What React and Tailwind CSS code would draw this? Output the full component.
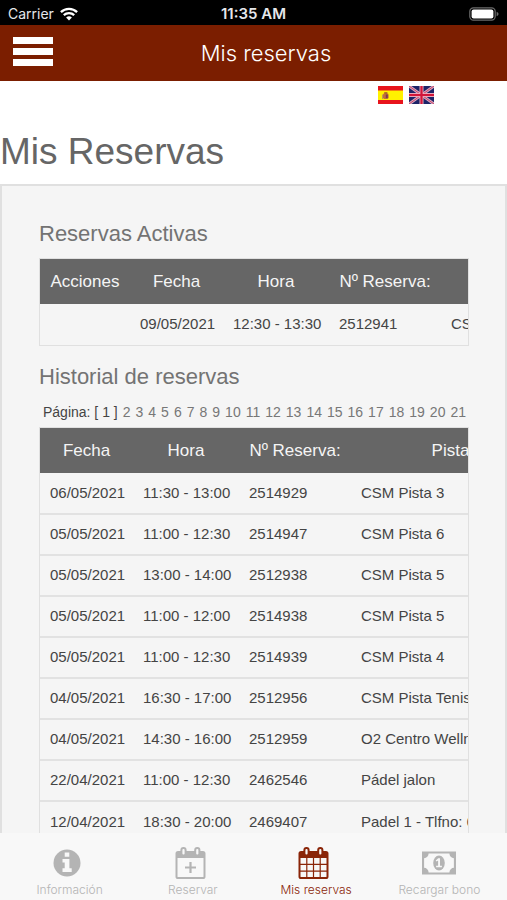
const activas = [
  { fecha: "09/05/2021", hora: "12:30 - 13:30", numero: "2512941", pista: "CSM Pista 5" },
];

const historial = [
  { fecha: "06/05/2021", hora: "11:30 - 13:00", numero: "2514929", pista: "CSM Pista 3" },
  { fecha: "05/05/2021", hora: "11:00 - 12:30", numero: "2514947", pista: "CSM Pista 6" },
  { fecha: "05/05/2021", hora: "13:00 - 14:00", numero: "2512938", pista: "CSM Pista 5" },
  { fecha: "05/05/2021", hora: "11:00 - 12:00", numero: "2514938", pista: "CSM Pista 5" },
  { fecha: "05/05/2021", hora: "11:00 - 12:30", numero: "2514939", pista: "CSM Pista 4" },
  { fecha: "04/05/2021", hora: "16:30 - 17:00", numero: "2512956", pista: "CSM Pista Tenis" },
  { fecha: "04/05/2021", hora: "14:30 - 16:00", numero: "2512959", pista: "O2 Centro Wellness" },
  { fecha: "22/04/2021", hora: "11:00 - 12:30", numero: "2462546", pista: "Pádel jalon" },
  { fecha: "12/04/2021", hora: "18:30 - 20:00", numero: "2469407", pista: "Padel 1 - Tlfno: 6" },
];

const paginas = Array.from({ length: 20 }, (_, i) => i + 2);

const SpainFlag = () => (
  <svg viewBox="0 0 25 18" className="block w-[25px] h-[18px]" aria-hidden="true">
    <rect width="25" height="18" fill="#e8141c" />
    <rect y="4.5" width="25" height="9.5" fill="#fff200" />
    <rect x="5" y="7.5" width="5.6" height="5.5" rx="1.4" fill="#c0703a" />
    <path d="M6.2 6.2h3.2v1.6H6.2z" fill="#a8542c" />
    <path d="M7.8 8.5h2v3.6h-2z" fill="#7d3b52" />
    <path d="M4 8.4h1v4.6H4z" fill="#b9a05a" />
  </svg>
);

const UkFlag = () => (
  <svg viewBox="0 0 25 18" className="block w-[25px] h-[18px]" aria-hidden="true">
    <rect width="25" height="18" fill="#1d2468" />
    <path d="M0 0l25 18M25 0L0 18" stroke="#d9a9c0" strokeWidth="2.8" />
    <path d="M0 0l25 18M25 0L0 18" stroke="#c8446a" strokeWidth="1" />
    <path d="M12.5 0v18M0 9h25" stroke="#e9a9ba" strokeWidth="4" />
    <path d="M12.5 0v18M0 9h25" stroke="#d2163a" strokeWidth="2.2" />
  </svg>
);

const InfoIcon = () => (
  <svg viewBox="0 0 36 34" className="w-9 h-[34px]" fill="currentColor" aria-hidden="true">
    <circle cx="15" cy="17" r="13.5" />
    <path
      d="M12.7 6.6h4.6v4.2h-4.6zM10.5 13h6.9v9.2h2.3v3.7h-9.2v-3.7h2.2v-5.6h-2.2z"
      fill="#f8f8f8"
    />
  </svg>
);

const CalendarPlusIcon = () => (
  <svg viewBox="0 0 36 34" className="w-9 h-[34px]" fill="none" stroke="currentColor" aria-hidden="true">
    <rect x="1.5" y="6" width="28" height="26" rx="1.6" strokeWidth="2" />
    <path d="M1.5 6h28v6h-28z" fill="currentColor" stroke="none" />
    <rect x="6.4" y="2" width="4.2" height="7.6" rx="2" fill="#f8f8f8" strokeWidth="2" />
    <rect x="20.2" y="2" width="4.2" height="7.6" rx="2" fill="#f8f8f8" strokeWidth="2" />
    <path d="M15.5 16v11M10 21.5h11" strokeWidth="2.2" />
  </svg>
);

const CalendarIcon = () => (
  <svg viewBox="0 0 36 34" className="w-9 h-[34px]" fill="none" stroke="currentColor" aria-hidden="true">
    <rect x="1.5" y="6" width="28" height="26" rx="1.6" strokeWidth="2" />
    <path d="M1.5 6h28v6h-28z" fill="currentColor" stroke="none" />
    <rect x="6.4" y="2" width="4.2" height="7.6" rx="2" fill="#f8f8f8" strokeWidth="2" />
    <rect x="20.2" y="2" width="4.2" height="7.6" rx="2" fill="#f8f8f8" strokeWidth="2" />
    <path d="M8.8 12v20M15.5 12v20M22.2 12v20M1.5 18.3h28M1.5 25.2h28" strokeWidth="1.2" />
  </svg>
);

const MoneyIcon = () => (
  <svg viewBox="0 0 36 34" className="w-9 h-[34px]" fill="currentColor" aria-hidden="true">
    <path
      fillRule="evenodd"
      d="M1 5.5h34v23H1zM7.6 7.6a4.6 4.6 0 0 1-4.5 4.6v9.6a4.6 4.6 0 0 1 4.5 4.6h20.8a4.6 4.6 0 0 1 4.5-4.6v-9.6a4.6 4.6 0 0 1-4.5-4.6z"
    />
    <ellipse cx="18" cy="17" rx="5.8" ry="7.4" />
    <path d="M17.2 12.3h1.8v7.5h1.9v1.5h-5.8v-1.5h2v-5.2l-1.5 1-.9-1.2z" fill="#f8f8f8" />
  </svg>
);

const tabs = [
  { label: "Información", Icon: InfoIcon },
  { label: "Reservar", Icon: CalendarPlusIcon },
  { label: "Mis reservas", Icon: CalendarIcon, active: true },
  { label: "Recargar bono", Icon: MoneyIcon },
];

const StatusBar = () => (
  <div className="grid grid-cols-3 items-center h-[25px] shrink-0 bg-black text-white px-2 pt-[2px] font-[Inter,sans-serif]">
    <div className="flex items-center gap-1.5 text-sm text-gray-200">
      <span>Carrier</span>
      <svg viewBox="0 0 18 14" className="w-[18px] h-[14px]" fill="none" stroke="#fff" strokeWidth="2.3" aria-hidden="true">
        <path d="M.9 5.1a11.6 11.6 0 0 1 16.2 0" />
        <path d="M3.8 8.2a7.5 7.5 0 0 1 10.4 0" />
        <path d="M9 13.6l-2.9-3a4.2 4.2 0 0 1 5.8 0z" fill="#fff" stroke="none" />
      </svg>
    </div>
    <div className="text-center text-[15px] leading-5 font-semibold text-gray-200">11:35 AM</div>
    <div className="flex justify-end">
      <svg viewBox="0 0 30 14" className="w-[30px] h-[14px]" aria-hidden="true">
        <rect x=".8" y=".8" width="25.4" height="12.4" rx="3.6" fill="none" stroke="#6b6b6b" strokeWidth="1.2" />
        <rect x="2.6" y="2.6" width="21.8" height="8.8" rx="2" fill="#fff" />
        <path d="M27.6 4.8c1.3.5 1.9 1.3 1.9 2.2s-.6 1.7-1.9 2.2z" fill="#6b6b6b" />
      </svg>
    </div>
  </div>
);

const ReservasTable = ({ rows, acciones }) => (
  <div className="overflow-hidden border border-[#e0e0e0]">
    <table className={acciones ? "table-fixed w-[600px]" : "table-fixed w-[510px]"}>
      <colgroup>
        {acciones && <col className="w-[90px]" />}
        <col className="w-[93px]" />
        <col className="w-[106px]" />
        <col className="w-[112px]" />
        <col />
      </colgroup>
      <thead className="bg-[#666] text-[#f5f5f5] text-[17px]">
        <tr className="h-[45px]">
          {acciones && <th className="font-normal">Acciones</th>}
          <th className="font-normal">Fecha</th>
          <th className="font-normal">Hora</th>
          <th className="font-normal">Nº Reserva:</th>
          <th className="font-normal">Pista</th>
        </tr>
      </thead>
      <tbody className="text-[15px] text-[#444]">
        {rows.map((row) => (
          <tr key={row.numero} className="h-[41px] border-b-2 border-[#e2e2e2] last:border-b-0">
            {acciones && <td></td>}
            <td className="px-[10px] whitespace-nowrap">{row.fecha}</td>
            <td className="px-[10px] whitespace-nowrap">{row.hora}</td>
            <td className="px-[10px] whitespace-nowrap">{row.numero}</td>
            <td className="px-[10px] whitespace-nowrap">{row.pista}</td>
          </tr>
        ))}
      </tbody>
    </table>
  </div>
);

const App = () => {
  return (
    <div className="flex flex-col h-screen overflow-hidden bg-white font-['Liberation_Sans',Arial,sans-serif]">
      <StatusBar />

      {/* Header */}
      <header className="flex items-center h-14 shrink-0 bg-[#7b1e00] pl-[13px] pr-7 text-white">
        <button type="button" aria-label="Menú" className="flex flex-col gap-1 w-10 mb-1">
          <span className="h-[7px] bg-white"></span>
          <span className="h-[7px] bg-white"></span>
          <span className="h-[7px] bg-white"></span>
        </button>
        <div className="flex-1 text-center text-[22px] font-light font-[Inter,sans-serif]">
          Mis reservas
        </div>
      </header>

      <main className="flex-1 min-h-0 overflow-hidden">
        {/* Languages */}
        <div className="flex justify-end gap-1.5 pt-[5px] pr-[73px]">
          <a href="#es" aria-label="Español">
            <SpainFlag />
          </a>
          <a href="#en" aria-label="English">
            <UkFlag />
          </a>
        </div>

        <h1 className="mt-6 mb-2 text-[37px] leading-12 text-[#666]">Mis Reservas</h1>

        <section className="border-2 border-[#e0e0e0] bg-[#f5f5f5] pl-[37px] pr-9 pt-[34px]">
          <h2 className="mb-[10px] text-[22px] leading-7 text-[#737373]">Reservas Activas</h2>
          <ReservasTable rows={activas} acciones />

          <h2 className="mt-[17px] mb-[10px] text-[22px] leading-7 text-[#737373]">
            Historial de reservas
          </h2>
          <nav className="flex gap-[5px] mb-1 pl-1 text-sm leading-[22px] text-[#777] whitespace-nowrap">
            <span className="text-[#444]">Página: [ 1 ]</span>
            {paginas.map((pagina) => (
              <a key={pagina} href={`#pagina-${pagina}`}>
                {pagina}
              </a>
            ))}
          </nav>
          <ReservasTable rows={historial} />
        </section>
      </main>

      {/* Bottom tabs */}
      <nav className="flex h-[67px] shrink-0 bg-[#f8f8f8] pl-2 pr-1.5 pt-[13px]">
        {tabs.map(({ label, Icon, active }) => (
          <a
            key={label}
            href="#tab"
            className={`flex flex-1 flex-col items-center ${
              active ? "text-[#8a2508]" : "text-[#b4b4b4]"
            }`}
          >
            <Icon />
            <span className="text-xs leading-5 font-light whitespace-nowrap font-[Inter,sans-serif]">
              {label}
            </span>
          </a>
        ))}
      </nav>
    </div>
  );
};

export default App;
